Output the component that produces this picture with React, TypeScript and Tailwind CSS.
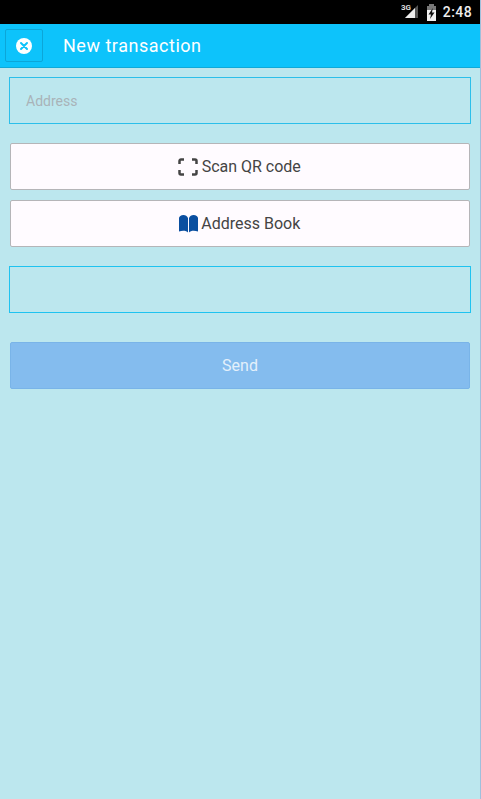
export default function App() {
  return (
    <div className="w-[481px] h-[799px] flex flex-col overflow-hidden bg-[#bce7ee] border-r border-[#9fc0dc] font-['Roboto',sans-serif]">
      <div className="h-6 shrink-0 bg-black flex items-center justify-end pr-2">
        <svg width="20" height="18" viewBox="0 0 20 18" className="mr-[5px] mt-[-2px]">
          <path d="M17 3V16H4z" fill="#555555" />
          <path d="M14 6V16H4z" fill="#eeeeee" />
          <text x="0" y="8" fontSize="8" fontWeight="700" fill="#dddddd" fontFamily="Roboto">3G</text>
        </svg>
        <svg width="11" height="17" viewBox="0 0 11 17" className="mr-[6px]">
          <path d="M3 0h5v2h2v15H1V2h2z" fill="#777777" />
          <path d="M1 6h9v11H1z" fill="#f0f0f0" />
          <path d="M6.800 4 2.500 10.500h2.500L4 15 8.500 8.500H6z" fill="#111111" />
        </svg>
        <span className="text-[#eeeeee] text-sm font-medium leading-none tracking-[0.4px]">2:48</span>
      </div>
      <div className="h-[44px] shrink-0 bg-[#0dc3fb] border-b border-[#0fa9d8] flex items-center pl-[5px]">
        <button className="w-[38px] h-[33px] border border-[#0ca6d8] rounded-[2px] flex items-center justify-center">
          <svg width="18" height="18" viewBox="0 0 18 18">
            <circle cx="9" cy="9" r="8" fill="#ffffff" />
            <path d="M6 6l6 6M12 6l-6 6" stroke="#0dc3fb" strokeWidth="2" strokeLinecap="round" />
          </svg>
        </button>
        <span className="ml-5 text-white text-lg leading-none tracking-[0.52px]">New transaction</span>
      </div>
      <div className="flex flex-col px-[9px] pt-[9px]">
        <div className="h-[47px] border border-[#2cbfea] flex items-center pl-4 text-sm text-[#a9b3b8]">Address</div>
        <button className="mx-px mt-[19px] h-[47px] bg-[#fffbff] border border-[#b5b5b8] rounded-[2px] flex items-center justify-center pr-px text-base text-[#444444] gap-[3.5px]">
          <svg width="20" height="18" viewBox="0 0 20 18" fill="none" stroke="#444444" strokeWidth="2.500">
            <path d="M1.500 6V3A1.500 1.500 0 0 1 3 1.500H6M14 1.500h3A1.500 1.500 0 0 1 18.500 3v3M18.500 12v3a1.500 1.500 0 0 1-1.500 1.500h-3M6 16.500H3A1.500 1.500 0 0 1 1.500 15v-3" />
          </svg>
          <span>Scan QR code</span>
        </button>
        <button className="mx-px mt-[10px] h-[47px] bg-[#fffbff] border border-[#b5b5b8] rounded-[2px] flex items-center justify-center pr-px text-base text-[#444444] gap-[3.5px]">
          <svg width="19" height="18" viewBox="0 0 19 18" fill="#0a4fa0">
            <path d="M9 3V17.500C7.500 15.800 4 15.300 0 16.500V3C0 1.500 2 0 4.500 0 6.500 0 8.200 1 9 3z" />
            <path d="M10 3V17.500C11.500 15.800 15 15.300 19 16.500V3C19 1.500 17 0 14.500 0 12.500 0 10.800 1 10 3z" />
          </svg>
          <span>Address Book</span>
        </button>
        <div className="mt-[19px] h-[47px] border border-[#1fc3f0]" />
        <button className="mx-px mt-[29px] h-[47px] bg-[#84bcee] border border-[#79b4e8] rounded-[2px] text-base text-[#e3f0fb]">Send</button>
      </div>
    </div>
  );
}
